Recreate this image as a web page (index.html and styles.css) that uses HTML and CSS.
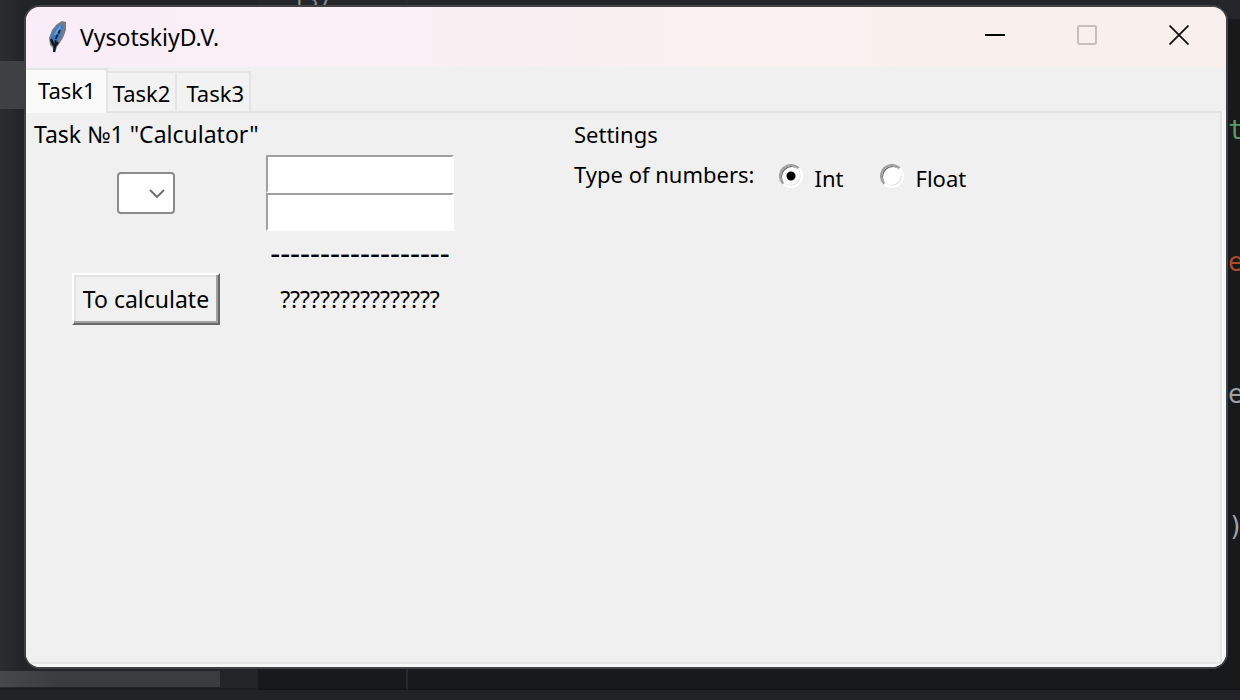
FILE: index.html
```html
<!DOCTYPE html>
<html lang="en">
<head>
<meta charset="utf-8">
<title>VysotskiyD.V.</title>
<link rel="stylesheet" href="styles.css">
</head>
<body>
<div class="editor" aria-hidden="true">
  <div class="sidebar"><div class="sidebar-row"></div><div class="scroll-track"><div class="scroll-thumb"></div></div></div>
  <div class="gutter"><span class="line-number">137</span></div>
  <div class="code">
    <div class="code-tail">
      <span class="string">t</span>
      <span class="keyword">e</span>
      <span class="plain">e</span>
      <span class="plain">)</span>
    </div>
  </div>
  <div class="status"></div>
</div>

<main class="window">
  <header class="titlebar">
    <svg class="feather" viewBox="0 0 20 32" aria-hidden="true">
      <path d="M7 31 L5 27 L2 24 L1 17 L4 9 L9 3 L14 0 L18 1 L18 9 L15 17 L11 23 L9 26 Z" fill="#5a5c63" opacity=".8"/>
      <path d="M4 22 L3 17 L6 10 L10 5 L14 3 L15 6 L14 11 L12 17 L8 23 Z" fill="#3b7cc9"/>
      <path d="M6 14 L9 8 L13 4 L12 9 L9 14 Z" fill="#62a3e6"/>
      <path d="M6 31 L7 24 M3 18 L5 23 L7 25 L10 21" fill="none" stroke="#10151c" stroke-width="2.4"/>
      <path d="M7 24 L8 17 L10 13 L12 9" fill="none" stroke="#10203a" stroke-width="2" stroke-dasharray="5 1"/>
    </svg>
    <h1 class="title">VysotskiyD.V.</h1>
    <div class="controls">
      <button class="control" aria-label="Minimize"><svg viewBox="0 0 20 20"><path d="M0 10H20" stroke="#000" stroke-width="2"/></svg></button>
      <button class="control" aria-label="Maximize" disabled><svg viewBox="0 0 20 20"><rect x="1" y="1" width="18" height="18" rx="1.5" fill="none" stroke="#c6c0bd" stroke-width="2"/></svg></button>
      <button class="control" aria-label="Close"><svg viewBox="0 0 20 20"><path d="M.5 .5L19.5 19.5M19.5 .5L.5 19.5" stroke="#111" stroke-width="1.8"/></svg></button>
    </div>
  </header>

  <nav class="tabs" role="tablist">
    <button class="tab selected" role="tab" aria-selected="true">Task1</button>
    <button class="tab" role="tab" aria-selected="false">Task2</button>
    <button class="tab" role="tab" aria-selected="false">Task3</button>
  </nav>

  <div class="frame">
    <div class="panel" role="tabpanel">
      <section class="calculator">
        <h2 class="heading">Task №1 "Calculator"</h2>
        <div class="operator">
          <select class="combo" aria-label="Operation"><option></option></select>
          <svg class="chevron" viewBox="0 0 16 10" aria-hidden="true"><path d="M1 1L8 8L15 1" fill="none" stroke="#6a6a6a" stroke-width="1.8"/></svg>
        </div>
        <input class="entry" type="text" aria-label="First number">
        <input class="entry" type="text" aria-label="Second number">
        <div class="divider">------------------</div>
        <button class="calculate">To calculate</button>
        <output class="result">????????????????</output>
      </section>

      <section class="settings">
        <h2 class="heading">Settings</h2>
        <div class="options">
          <span id="type-label">Type of numbers:</span>
          <div class="radios" role="radiogroup" aria-labelledby="type-label">
            <label class="choice"><input class="radio" type="radio" name="type" checked>Int</label>
            <label class="choice"><input class="radio" type="radio" name="type">Float</label>
          </div>
        </div>
      </section>
    </div>
  </div>
</main>
</body>
</html>
```

FILE: styles.css
```css
* { box-sizing: border-box; }

body {
  margin: 0;
  height: 100vh;
  position: relative;
  overflow: hidden;
  background: #18191b;
  color: #000;
  font: 23px/32px "Noto Sans", "Open Sans", sans-serif;
}

button, input, select { font: inherit; color: inherit; }

h1, h2 { margin: 0; font: inherit; }

/* Code editor behind the window */
.editor {
  height: 100%;
  display: grid;
  grid-template-columns: 258px 150px 1fr;
  grid-template-rows: 1fr 10px;
  font-family: "DejaVu Sans Mono", monospace;
}

.sidebar {
  display: flex;
  flex-direction: column;
  justify-content: space-between;
  padding-top: 61px;
  background: linear-gradient(90deg, #2b2c2f, #232427 24px);
}

.sidebar-row { height: 48px; background: #3e4044; }

.scroll-track { padding: 3px 0 1px; border-bottom: 2px solid #1b1c1e; }

.scroll-thumb {
  width: 220px;
  height: 16px;
  background: linear-gradient(90deg, #47484b, #3b3c3e 60px);
}

.gutter {
  overflow: hidden;
  padding-left: 34px;
  border-right: 2px solid #28292c;
  border-bottom: 2px solid #141517;
  background: linear-gradient(#25262a 19px, #18191b 19px);
}

.line-number {
  display: block;
  margin-top: -16px;
  line-height: 34px;
  font-size: 22px;
  color: #8b8e95;
}

.code {
  display: flex;
  justify-content: flex-end;
  overflow: hidden;
  border-top: 19px solid #25262a;
  border-bottom: 2px solid #141517;
}

.code-tail {
  width: 12px;
  display: flex;
  flex-direction: column;
  gap: 100px;
  padding-top: 95px;
  font-size: 26px;
}

.string { color: #589a68; }
.keyword { color: #a84b2b; }
.plain { color: #9ea1a8; }

.status { grid-column: 1 / -1; background: #222326; }

/* Application window */
.window {
  position: absolute;
  inset: 5px 12px 31px 24px;
  display: flex;
  flex-direction: column;
  overflow: hidden;
  border: 2px solid #414245;
  border-radius: 16px;
  background: #f0f0f0;
}

.titlebar {
  display: flex;
  align-items: center;
  height: 60px;
  flex: none;
  padding: 0 1px 0 22px;
  background: linear-gradient(90deg, #f9eef8, #f9f0ed 80%);
}

.feather { width: 20px; height: 32px; margin-right: 12px; }

.title { flex: 1; }

.controls { display: flex; height: 56px; align-self: flex-start; }

.control {
  width: 92px;
  padding: 0;
  border: 0;
  background: none;
}

.control svg { width: 20px; height: 20px; display: block; margin: auto; }

.tabs {
  position: relative;
  display: flex;
  align-items: flex-end;
  height: 46px;
  flex: none;
  font-size: 22px;
}

.tab {
  height: 42px;
  padding: 2px 5px 0;
  border: 2px solid #e4e4e4;
  border-left: 0;
  background: #f2f2f2;
}

.tab:last-child { padding-left: 9px; }

.tab.selected {
  height: 45px;
  padding: 0 10px 4px 12px;
  border-bottom: 0;
  background: #fafafa;
}

.frame {
  flex: 1;
  display: flex;
  margin-top: -2px;
  padding: 0 4px 3px 0;
  background: #f6f6f6;
}

.panel {
  flex: 1;
  display: flex;
  align-items: flex-start;
  gap: 120px;
  padding: 5px 8px;
  border: solid #e4e4e4;
  border-width: 2px 2px 2px 0;
  background: #f0f0f0;
}

.calculator {
  display: grid;
  grid-template-columns: 224px 188px;
  grid-template-rows: 37px 38px 38px 42px 52px;
  column-gap: 8px;
  justify-items: center;
  align-items: center;
}

.calculator .heading {
  grid-column: 1 / -1;
  justify-self: start;
  align-self: start;
}

.operator { grid-column: 1; grid-row: 2 / 4; position: relative; }

.combo {
  display: block;
  appearance: none;
  width: 58px;
  height: 42px;
  border: 2px solid #8b8b8b;
  border-radius: 4px;
  background: #fff;
}

.chevron {
  position: absolute;
  right: 10px;
  top: 17px;
  width: 16px;
  height: 10px;
  pointer-events: none;
}

.entry {
  grid-column: 2;
  width: 100%;
  height: 38px;
  border: 2px solid;
  border-color: #a0a0a0 #fff #fff #a0a0a0;
  border-radius: 0;
  background: #fff;
}

.divider { grid-column: 2; font-size: 31px; }

.calculate {
  height: 52px;
  padding: 0 9px;
  border: 2px solid;
  border-color: #fff #696969 #696969 #fff;
  box-shadow: inset -2px -2px #a0a0a0, inset 2px 2px #e3e3e3;
  background: #f0f0f0;
}

.settings { font-size: 22px; }

.options { display: flex; gap: 24px; margin-top: 8px; }

.radios { display: flex; gap: 36px; padding-top: 4px; }

.choice { display: flex; align-items: center; gap: 12px; }

.radio {
  appearance: none;
  width: 24px;
  height: 24px;
  margin: 0 0 4px;
  border: 2px solid;
  border-color: #a0a0a0 #fff #fff #a0a0a0;
  border-radius: 50%;
  background: #fff;
  box-shadow: inset 1px 1px #696969, inset -1px -1px #e3e3e3;
}

.radio:checked { background: radial-gradient(circle, #000 4px, #fff 5px); }
```
